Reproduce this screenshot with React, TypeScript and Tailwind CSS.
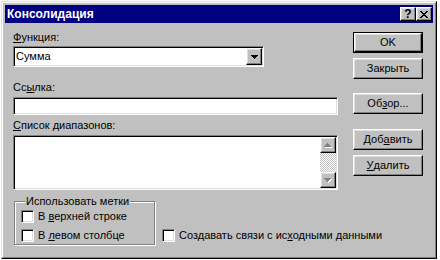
import React from 'react';

const raised =
  'border border-t-white border-l-white border-r-black border-b-black shadow-[inset_-1px_-1px_0_#808080,inset_1px_1px_0_#dfdfdf]';
const sunken =
  'border border-t-[#808080] border-l-[#808080] border-r-white border-b-white shadow-[inset_1px_1px_0_#000,inset_-1px_-1px_0_#dfdfdf]';

// pixel triangles, rows of widths 7,5,3,1
const Arrow: React.FC<{ down?: boolean; color: string }> = ({ down, color }) => {
  const rows = down ? [0, 1, 2, 3] : [3, 2, 1, 0];
  return (
    <>
      {rows.map((r, i) => (
        <rect key={i} x={r} y={i} width={7 - r * 2} height={1} fill={color} />
      ))}
    </>
  );
};

const DropArrow = () => (
  <svg width="7" height="4" viewBox="0 0 7 4" shapeRendering="crispEdges">
    <Arrow down color="#000" />
  </svg>
);

const ScrollArrow: React.FC<{ down?: boolean }> = ({ down }) => (
  <svg width="8" height="5" viewBox="0 0 8 5" shapeRendering="crispEdges">
    <g transform="translate(1,1)">
      <Arrow down={down} color="#fff" />
    </g>
    <Arrow down={down} color="#808080" />
  </svg>
);

const Btn: React.FC<{ children: React.ReactNode; def?: boolean; className?: string }> = ({
  children,
  def,
  className,
}) => {
  const inner = (
    <div className={`${raised} flex h-full w-full items-center justify-center bg-[#c0c0c0]`}>
      {children}
    </div>
  );
  return def ? (
    <div className={`h-[21px] w-[70px] border border-black ${className ?? ''}`}>{inner}</div>
  ) : (
    <div className={`h-[21px] w-[70px] ${className ?? ''}`}>{inner}</div>
  );
};

const Check: React.FC<{ children: React.ReactNode; className?: string }> = ({ children, className }) => (
  <div className={`flex h-[13px] items-center gap-[4px] ${className ?? ''}`}>
    <div className={`${sunken} h-[13px] w-[13px] bg-white`} />
    <span className="whitespace-nowrap">{children}</span>
  </div>
);

export default function App() {
  return (
    <div className="h-[260px] w-[440px] bg-white pl-px pt-px font-['Liberation_Sans',Arial,sans-serif] text-[11px] leading-[13px] text-black">
      <div className="flex h-[258px] w-[436px] flex-col border border-t-[#dfdfdf] border-l-[#dfdfdf] border-r-black border-b-black bg-[#c0c0c0]">
        <div className="flex flex-1 flex-col border border-t-white border-l-white border-r-[#808080] border-b-[#808080] p-[2px]">
          {/* title bar */}
          <div className="flex h-[18px] items-center bg-[#000080] pl-[2px] pr-[1px]">
            <span className="text-[12px] font-bold leading-[14px] text-white">Консолидация</span>
            <div className="ml-auto flex">
              <div className={`${raised} flex h-[14px] w-[16px] items-center justify-center bg-[#c0c0c0] text-[12px] font-bold leading-[12px]`}>
                ?
              </div>
              <div className={`${raised} flex h-[14px] w-[16px] items-center justify-center bg-[#c0c0c0]`}>
                <svg width="8" height="7" viewBox="0 0 8 7" shapeRendering="crispEdges">
                  <path d="M0 0h2v1h1v1h2v-1h1v-1h2v1h-1v1h-1v1h-1v1h1v1h1v1h1v1h-2v-1h-1v-1h-2v1h-1v1h-2v-1h1v-1h1v-1h1v-1h-1v-1h-1v-1h-1z" fill="#000" />
                </svg>
              </div>
            </div>
          </div>

          {/* body */}
          <div className="flex flex-1 flex-col pl-[8px] pr-[10px]">
            <div className="flex gap-[15px]">
              <div className="flex w-[325px] flex-col">
                <div className="mt-[8px] h-[13px]">
                  <u>Ф</u>ункция:
                </div>
                <div className={`${sunken} mt-[2px] flex h-[21px] w-[251px] items-center bg-white p-px`}>
                  <span className="pl-px">Сумма</span>
                  <div className={`${raised} ml-auto flex h-[17px] w-[16px] items-center justify-center bg-[#c0c0c0]`}>
                    <DropArrow />
                  </div>
                </div>
                <div className="mt-[14px] h-[13px]">
                  Сс<u>ы</u>лка:
                </div>
                <div className={`${sunken} mt-[3px] h-[18px] w-full bg-white`} />
                <div className="mt-[4px] h-[13px]">
                  <u>С</u>писок диапазонов:
                </div>
                <div className={`${sunken} mt-[3px] flex h-[55px] w-full justify-end bg-white p-px`}>
                  <div className="flex w-[16px] flex-col">
                    <div className={`${raised} flex h-[16px] items-center justify-center bg-[#c0c0c0]`}>
                      <ScrollArrow />
                    </div>
                    <div className="flex-1 bg-[repeating-conic-gradient(#c0c0c0_0_25%,#ffffff_0_50%)] bg-[length:2px_2px]" />
                    <div className={`${raised} flex h-[16px] items-center justify-center bg-[#c0c0c0]`}>
                      <ScrollArrow down />
                    </div>
                  </div>
                </div>
              </div>

              <div className="flex w-[70px] flex-col">
                <Btn def className="mt-[9px]">
                  OK
                </Btn>
                <Btn className="mt-[5px]">Закрыть</Btn>
                <Btn className="mt-[14px]">
                  Об<u>з</u>ор...
                </Btn>
                <Btn className="mt-[15px]">
                  Доб<u>а</u>вить
                </Btn>
                <Btn className="mt-[5px]">
                  <u>У</u>далить
                </Btn>
              </div>
            </div>

            <div className="mt-[5px] flex items-start">
              <fieldset className="ml-px w-[141px] border border-[#808080] pb-[2px] pl-[6px] shadow-[1px_1px_0_#fff,inset_1px_1px_0_#fff]">
                <legend className="ml-[4px] bg-[#c0c0c0] px-px leading-[13px]">Использовать метки</legend>
                <Check className="mt-[2px]">
                  В <u>в</u>ерхней строке
                </Check>
                <Check className="mt-[6px]">
                  В <u>л</u>евом столбце
                </Check>
              </fieldset>
              <Check className="ml-[7px] mt-[34px]">
                Создавать связи с ис<u>х</u>одными данными
              </Check>
            </div>
          </div>
        </div>
      </div>
    </div>
  );
}
